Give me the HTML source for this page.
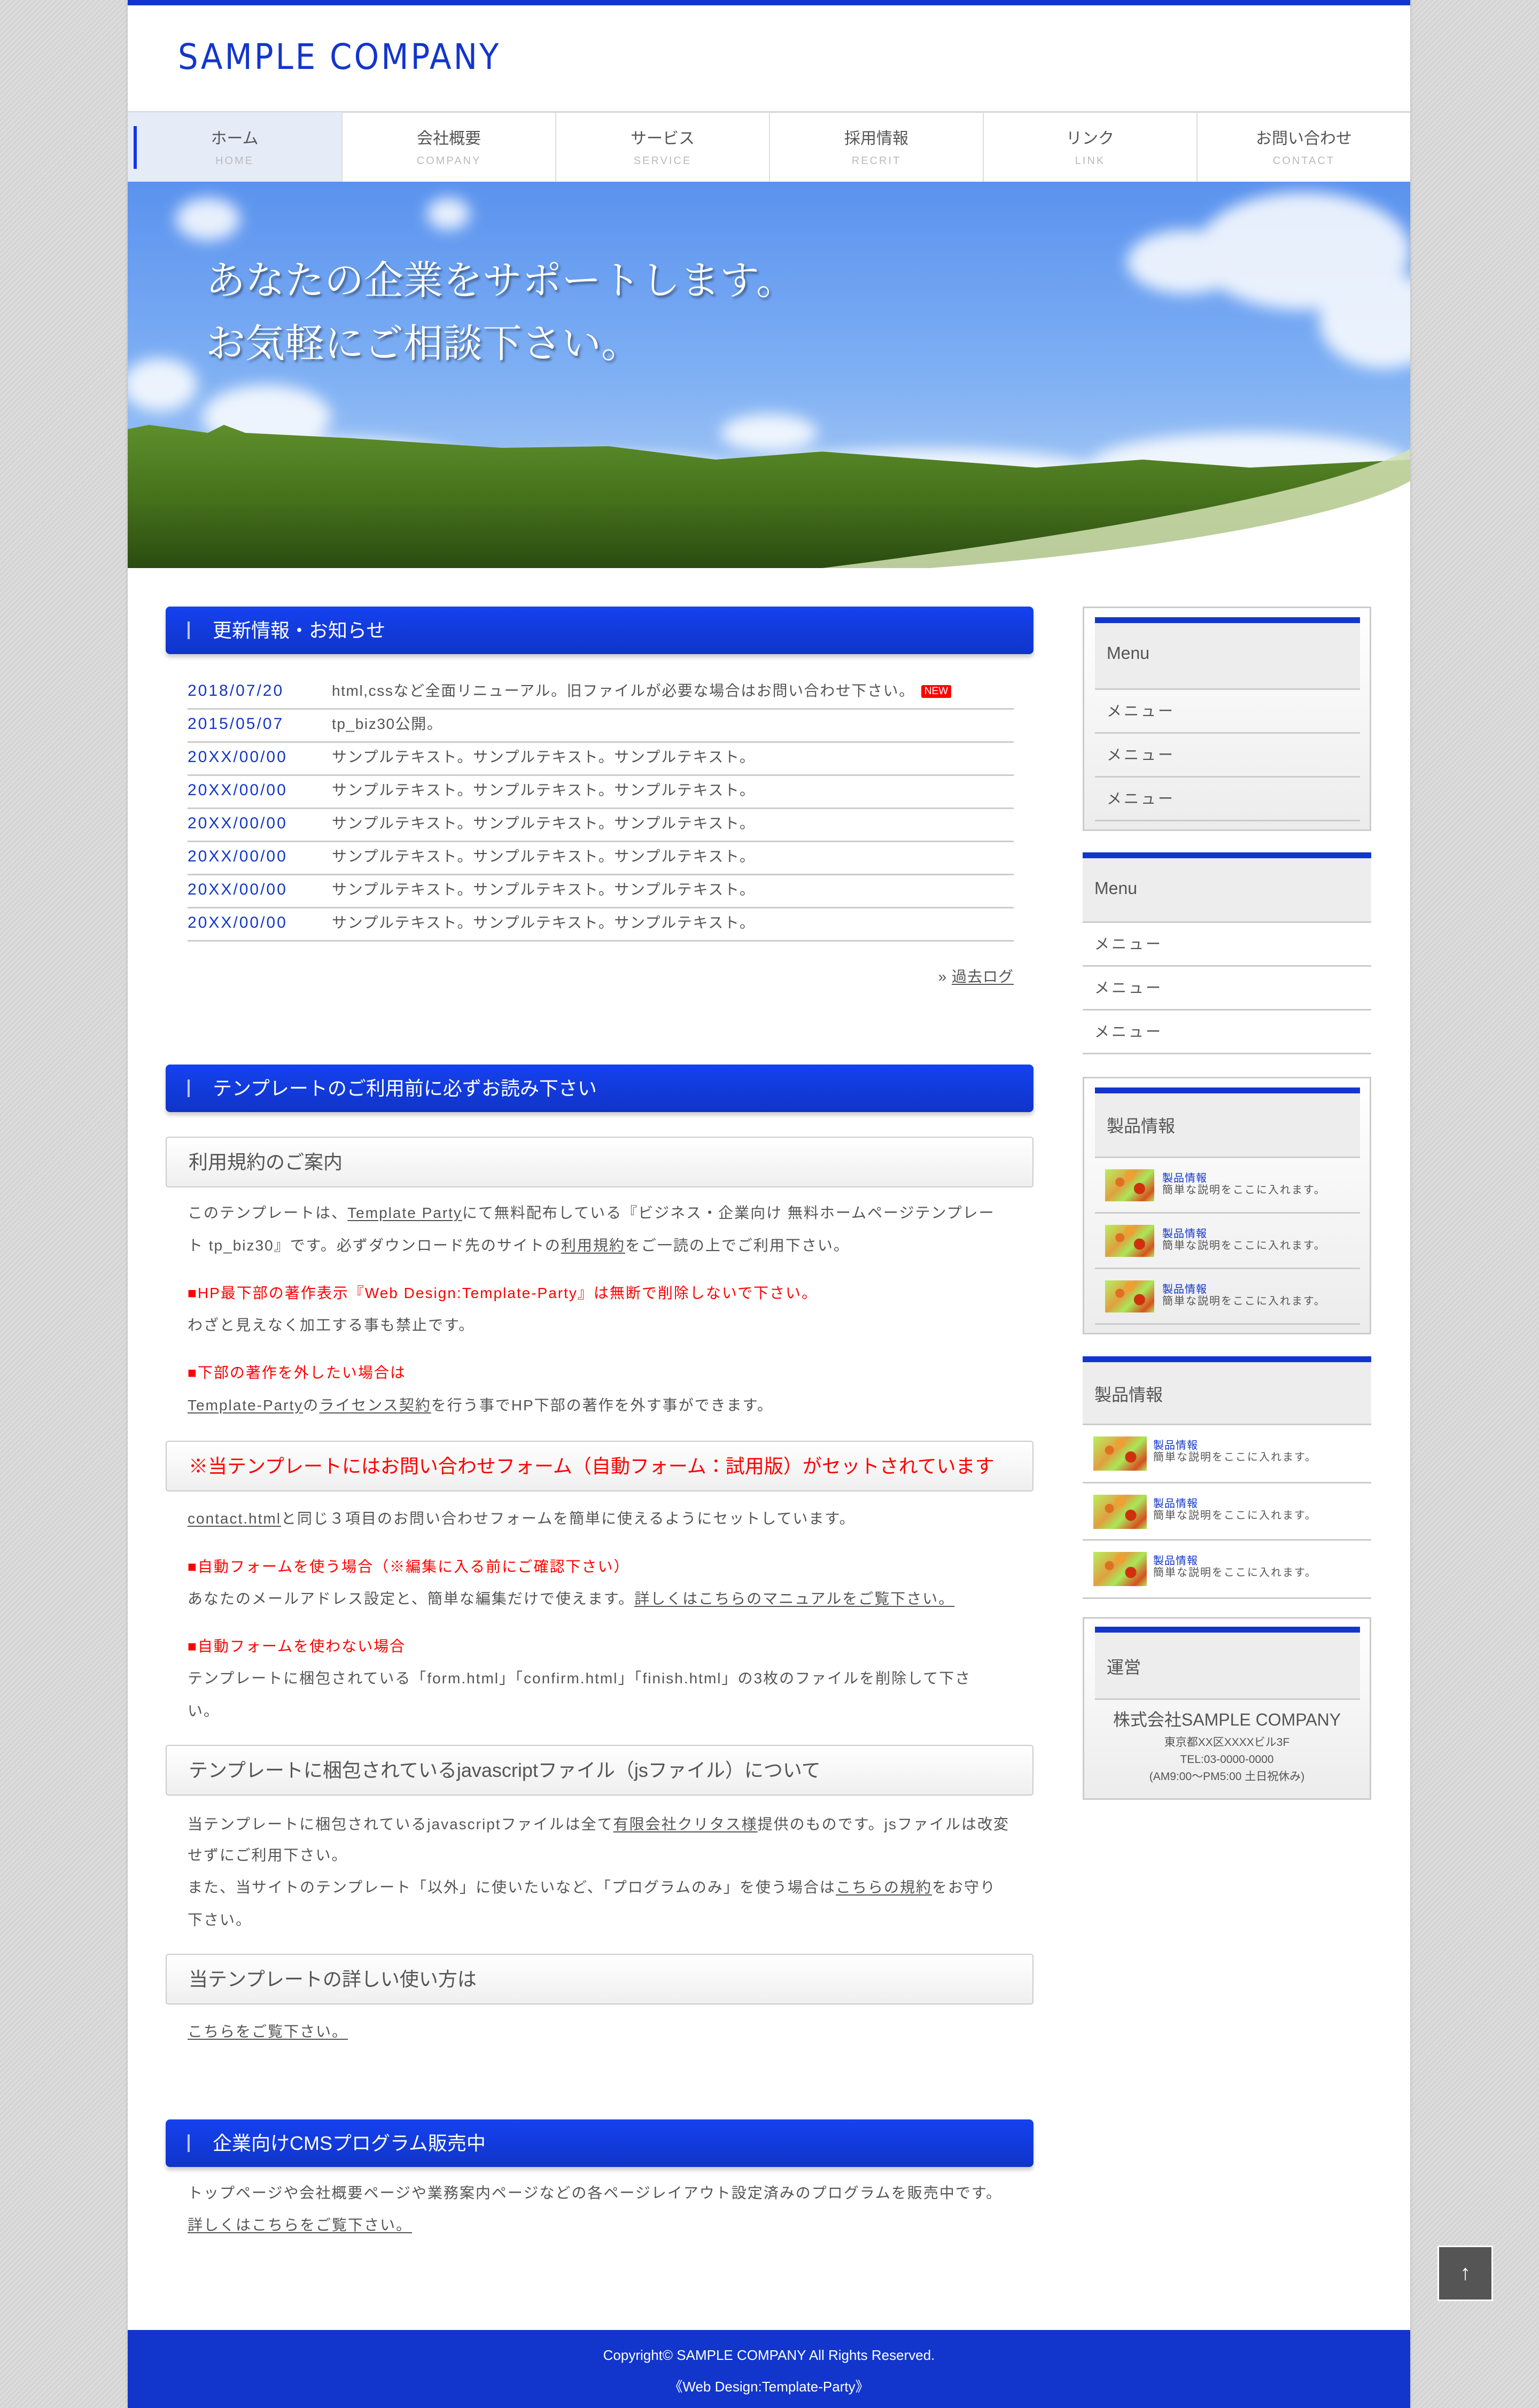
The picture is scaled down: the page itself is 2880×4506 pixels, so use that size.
<!DOCTYPE html>
<html><head><meta charset="utf-8">
<style>
*{margin:0;padding:0;box-sizing:border-box}
html,body{width:2880px;height:4506px;overflow:hidden}
body{background:#dadada repeating-linear-gradient(135deg,#dcdcdc 0 4px,#d3d3d3 4px 7px);font-family:"Liberation Sans","Noto Sans CJK JP",sans-serif;color:#555;position:relative}
#wrap{position:absolute;left:239px;top:0;width:2400px;height:4506px;background:#fff;box-shadow:0 0 6px rgba(0,0,0,.15)}
.a{position:absolute;white-space:nowrap}
.t{position:absolute;left:112px;font-size:28px;line-height:40px;white-space:nowrap;letter-spacing:2px;color:#555}
.red{color:#f00}
u{text-decoration:underline;text-underline-offset:4px}
.hbar{position:absolute;left:71px;width:1624px;height:89px;border-radius:8px;background:linear-gradient(#1542f0,#1034c8);box-shadow:0 6px 8px rgba(0,0,0,.2);color:#fff;font-size:36px;line-height:89px;padding-left:88px}
.hbar:before{content:"";position:absolute;left:41px;top:28px;width:4px;height:33px;background:#b8c4ea}
.box{position:absolute;left:71px;width:1624px;height:95px;border:2px solid #ccc;border-radius:5px;background:linear-gradient(#fff,#efefef);font-size:36px;line-height:91px;padding-left:41px;color:#555}
.nav{position:absolute;top:210px;height:130px;width:400px;border-left:2px solid #ddd;text-align:center}
.nav .j{position:absolute;left:0;right:0;top:24px;font-size:30px;color:#555}
.nav .e{position:absolute;left:0;right:0;top:80px;font-size:20px;color:#bbb;letter-spacing:3px}
.date{position:absolute;left:112px;font-size:30px;color:#1237c8;letter-spacing:3px;line-height:40px}
.nt{position:absolute;left:382px;font-size:28px;letter-spacing:1.6px;line-height:40px;white-space:nowrap}
.nl{position:absolute;left:112px;width:1546px;height:3px;background:#ccc}
.sb{position:absolute;left:1787px;width:540px}
.bord{border:3px solid #ccc;background:linear-gradient(#fff,#ececec)}
.sh{position:absolute;background:#ededed;border-top:11px solid #1236cc;border-bottom:3px solid #ccc;font-size:32px;color:#555}
.mi{position:absolute;height:82px;border-bottom:3px solid #ccc;font-size:28px;letter-spacing:4px;line-height:80px;color:#555}
.th{position:absolute;width:92px;height:60px;background:radial-gradient(circle at 30% 40%,#e07020 0 8px,transparent 9px),radial-gradient(circle at 70% 60%,#d03010 0 10px,transparent 11px),radial-gradient(circle at 50% 20%,#f0a030 0 9px,transparent 10px),linear-gradient(135deg,#b8f060,#e0a040 40%,#a8e858 60%,#d85020 85%,#b0ec5c)}
.pt{position:absolute;font-size:20px;line-height:22px;white-space:nowrap}
.pt b{font-weight:normal;color:#1236cc;display:block;letter-spacing:1px}
.pt span{letter-spacing:2px;color:#555}
</style></head><body>
<div id="wrap">
<div class="a" style="left:0;top:0;width:2400px;height:10px;background:#1236cc"></div>
<div class="a" style="left:94px;top:62px;font-size:66px;letter-spacing:4px;color:#1236cc;font-family:'DejaVu Sans Condensed','Liberation Sans',sans-serif;line-height:90px">SAMPLE COMPANY</div>
<div class="a" style="left:0;top:208px;width:2400px;height:3px;background:#d6d6d6"></div>
<div class="nav" style="left:0;background:#e6ebf8;border-left:0"><div class="a" style="left:11px;top:26px;width:6px;height:80px;background:#1236e8"></div><div class="j">ホーム</div><div class="e">HOME</div></div>
<div class="nav" style="left:400px"><div class="j">会社概要</div><div class="e">COMPANY</div></div>
<div class="nav" style="left:800px"><div class="j">サービス</div><div class="e">SERVICE</div></div>
<div class="nav" style="left:1200px"><div class="j">採用情報</div><div class="e">RECRIT</div></div>
<div class="nav" style="left:1600px"><div class="j">リンク</div><div class="e">LINK</div></div>
<div class="nav" style="left:2000px"><div class="j">お問い合わせ</div><div class="e">CONTACT</div></div>

<svg class="a" style="left:0;top:340px" width="2400" height="723" viewBox="0 0 2400 723">
<defs>
<linearGradient id="sky" x1="0" y1="0" x2="0" y2="1"><stop offset="0" stop-color="#5a92ee"/><stop offset=".5" stop-color="#7fb0f4"/><stop offset="1" stop-color="#b8d4f4"/></linearGradient>
<linearGradient id="hill" x1="0" y1="0" x2="0" y2="1"><stop offset="0" stop-color="#5e8e2c"/><stop offset=".5" stop-color="#46721c"/><stop offset="1" stop-color="#2a4c10"/></linearGradient>
<filter id="bl"><feGaussianBlur stdDeviation="14"/></filter>
</defs>
<rect width="2400" height="723" fill="url(#sky)"/>
<g fill="#fff" opacity=".85" filter="url(#bl)">
<ellipse cx="2200" cy="130" rx="200" ry="110"/><ellipse cx="1980" cy="150" rx="110" ry="60"/><ellipse cx="2350" cy="260" rx="120" ry="90"/>
<ellipse cx="260" cy="440" rx="120" ry="60"/><ellipse cx="60" cy="380" rx="70" ry="50"/>
<ellipse cx="400" cy="540" rx="260" ry="60"/><ellipse cx="900" cy="560" rx="300" ry="50"/><ellipse cx="1500" cy="560" rx="360" ry="60"/><ellipse cx="2100" cy="530" rx="300" ry="60"/>
<ellipse cx="150" cy="70" rx="60" ry="40"/><ellipse cx="600" cy="60" rx="40" ry="30"/><ellipse cx="1200" cy="470" rx="90" ry="35"/>
</g>
<path d="M0 463 L40 455 L150 470 L180 455 L220 470 L420 480 L700 498 L900 495 L1100 520 L1300 505 L1500 520 L1700 535 L1900 520 L2100 535 L2400 520 L2400 723 L0 723Z" fill="url(#hill)"/>
<path d="M1300 723 C1800 660 2250 580 2400 500 L2400 723Z" fill="#d4e2b4" opacity=".85"/>
<path d="M1500 723 C1950 690 2300 620 2400 560 L2400 723Z" fill="#fff"/>
</svg>
<div class="a" style="left:146px;top:460px;font-size:74px;line-height:118px;color:#fff;font-family:'Noto Serif CJK JP','Noto Serif CJK SC',serif;text-shadow:3px 4px 5px rgba(0,0,0,.45)">あなたの企業をサポートします。<br>お気軽にご相談下さい。</div>

<!-- main -->
<div class="hbar" style="top:1135px">更新情報・お知らせ</div>
<div class="date" style="top:1273px">2018/07/20</div><div class="nt" style="top:1273px">html,cssなど全面リニューアル。旧ファイルが必要な場合はお問い合わせ下さい。<span style="display:inline-block;background:#f00;color:#fff;font-size:19px;line-height:24px;padding:0 6px;border-radius:3px;vertical-align:3px;margin-left:12px;letter-spacing:0">NEW</span></div><div class="nl" style="top:1325px"></div>
<div class="date" style="top:1335px">2015/05/07</div><div class="nt" style="top:1335px">tp_biz30公開。</div><div class="nl" style="top:1387px"></div>
<div class="date" style="top:1397px">20XX/00/00</div><div class="nt" style="top:1397px">サンプルテキスト。サンプルテキスト。サンプルテキスト。</div><div class="nl" style="top:1449px"></div>
<div class="date" style="top:1459px">20XX/00/00</div><div class="nt" style="top:1459px">サンプルテキスト。サンプルテキスト。サンプルテキスト。</div><div class="nl" style="top:1511px"></div>
<div class="date" style="top:1521px">20XX/00/00</div><div class="nt" style="top:1521px">サンプルテキスト。サンプルテキスト。サンプルテキスト。</div><div class="nl" style="top:1573px"></div>
<div class="date" style="top:1583px">20XX/00/00</div><div class="nt" style="top:1583px">サンプルテキスト。サンプルテキスト。サンプルテキスト。</div><div class="nl" style="top:1635px"></div>
<div class="date" style="top:1645px">20XX/00/00</div><div class="nt" style="top:1645px">サンプルテキスト。サンプルテキスト。サンプルテキスト。</div><div class="nl" style="top:1697px"></div>
<div class="date" style="top:1707px">20XX/00/00</div><div class="nt" style="top:1707px">サンプルテキスト。サンプルテキスト。サンプルテキスト。</div><div class="nl" style="top:1759px"></div>
<div class="t" style="left:auto;right:742px;top:1808px;letter-spacing:1px">» <u>過去ログ</u></div>

<div class="hbar" style="top:1992px">テンプレートのご利用前に必ずお読み下さい</div>
<div class="box" style="top:2127px">利用規約のご案内</div>
<div class="t" style="top:2250px">このテンプレートは、<u>Template Party</u>にて無料配布している『ビジネス・企業向け 無料ホームページテンプレー</div>
<div class="t" style="top:2311px">ト tp_biz30』です。必ずダウンロード先のサイトの<u>利用規約</u>をご一読の上でご利用下さい。</div>
<div class="t red" style="top:2400px">■HP最下部の著作表示『Web Design:Template-Party』は無断で削除しないで下さい。</div>
<div class="t" style="top:2460px">わざと見えなく加工する事も禁止です。</div>
<div class="t red" style="top:2549px">■下部の著作を外したい場合は</div>
<div class="t" style="top:2610px"><u>Template-Party</u>の<u>ライセンス契約</u>を行う事でHP下部の著作を外す事ができます。</div>
<div class="box red" style="top:2696px;color:#f00">※当テンプレートにはお問い合わせフォーム（自動フォーム：試用版）がセットされています</div>
<div class="t" style="top:2822px"><u>contact.html</u>と同じ３項目のお問い合わせフォームを簡単に使えるようにセットしています。</div>
<div class="t red" style="top:2912px">■自動フォームを使う場合（※編集に入る前にご確認下さい）</div>
<div class="t" style="top:2972px">あなたのメールアドレス設定と、簡単な編集だけで使えます。<u>詳しくはこちらのマニュアルをご覧下さい。</u></div>
<div class="t red" style="top:3061px">■自動フォームを使わない場合</div>
<div class="t" style="top:3121px">テンプレートに梱包されている「form.html」「confirm.html」「finish.html」の3枚のファイルを削除して下さ</div>
<div class="t" style="top:3182px">い。</div>
<div class="box" style="top:3265px">テンプレートに梱包されているjavascriptファイル（jsファイル）について</div>
<div class="t" style="top:3394px">当テンプレートに梱包されているjavascriptファイルは全て<u>有限会社クリタス様</u>提供のものです。jsファイルは改変</div>
<div class="t" style="top:3452px">せずにご利用下さい。</div>
<div class="t" style="top:3512px">また、当サイトのテンプレート「以外」に使いたいなど、「プログラムのみ」を使う場合は<u>こちらの規約</u>をお守り</div>
<div class="t" style="top:3573px">下さい。</div>
<div class="box" style="top:3656px">当テンプレートの詳しい使い方は</div>
<div class="t" style="top:3782px"><u>こちらをご覧下さい。</u></div>

<div class="hbar" style="top:3966px">企業向けCMSプログラム販売中</div>
<div class="t" style="top:4084px">トップページや会社概要ページや業務案内ページなどの各ページレイアウト設定済みのプログラムを販売中です。</div>
<div class="t" style="top:4144px"><u>詳しくはこちらをご覧下さい。</u></div>

<!-- sidebar -->
<div class="sb bord" style="top:1135px;height:420px">
 <div class="sh" style="left:20px;top:17px;width:496px;height:136px;padding:38px 0 0 22px">Menu</div>
 <div class="mi" style="left:20px;top:153px;width:496px;padding-left:22px">メニュー</div>
 <div class="mi" style="left:20px;top:235px;width:496px;padding-left:22px">メニュー</div>
 <div class="mi" style="left:20px;top:317px;width:496px;padding-left:22px">メニュー</div>
</div>
<div class="sb" style="top:1595px;height:380px">
 <div class="sh" style="left:0;top:0;width:540px;height:132px;padding:38px 0 0 22px">Menu</div>
 <div class="mi" style="left:0;top:132px;width:540px;padding-left:22px">メニュー</div>
 <div class="mi" style="left:0;top:214px;width:540px;padding-left:22px">メニュー</div>
 <div class="mi" style="left:0;top:296px;width:540px;padding-left:22px">メニュー</div>
</div>
<div class="sb bord" style="top:2015px;height:482px">
 <div class="sh" style="left:20px;top:17px;width:496px;height:132px;padding:36px 0 0 22px">製品情報</div>
 <div class="mi" style="left:20px;top:149px;width:496px;height:104px"></div>
 <div class="mi" style="left:20px;top:253px;width:496px;height:104px"></div>
 <div class="mi" style="left:20px;top:357px;width:496px;height:104px"></div>
 <div class="th" style="left:39px;top:170px"></div><div class="pt" style="left:146px;top:176px"><b>製品情報</b><span>簡単な説明をここに入れます。</span></div>
 <div class="th" style="left:39px;top:274px"></div><div class="pt" style="left:146px;top:280px"><b>製品情報</b><span>簡単な説明をここに入れます。</span></div>
 <div class="th" style="left:39px;top:378px"></div><div class="pt" style="left:146px;top:384px"><b>製品情報</b><span>簡単な説明をここに入れます。</span></div>
</div>
<div class="sb" style="top:2538px;height:460px">
 <div class="sh" style="left:0;top:0;width:540px;height:129px;padding:36px 0 0 22px">製品情報</div>
 <div class="mi" style="left:0;top:129px;width:540px;height:109px"></div>
 <div class="mi" style="left:0;top:238px;width:540px;height:107px"></div>
 <div class="mi" style="left:0;top:345px;width:540px;height:109px"></div>
 <div class="th" style="left:20px;top:150px;width:100px;height:64px"></div><div class="pt" style="left:132px;top:156px"><b>製品情報</b><span>簡単な説明をここに入れます。</span></div>
 <div class="th" style="left:20px;top:259px;width:100px;height:64px"></div><div class="pt" style="left:132px;top:265px"><b>製品情報</b><span>簡単な説明をここに入れます。</span></div>
 <div class="th" style="left:20px;top:366px;width:100px;height:64px"></div><div class="pt" style="left:132px;top:372px"><b>製品情報</b><span>簡単な説明をここに入れます。</span></div>
</div>
<div class="sb bord" style="top:3026px;height:342px">
 <div class="sh" style="left:20px;top:15px;width:496px;height:137px;padding:40px 0 0 22px">運営</div>
 <div class="a" style="left:0;width:534px;top:164px;text-align:center;font-size:32px;color:#555">株式会社SAMPLE COMPANY</div>
 <div class="a" style="left:0;width:534px;top:216px;text-align:center;font-size:21px;line-height:32px;color:#555">東京都XX区XXXXビル3F<br>TEL:03-0000-0000<br>(AM9:00～PM5:00 土日祝休み)</div>
</div>

<div class="a" style="left:0;top:4360px;width:2400px;height:146px;background:#1236cc;color:#fff;text-align:center;font-size:26px">
 <div style="position:absolute;left:0;right:0;top:32px">Copyright© SAMPLE COMPANY All Rights Reserved.</div>
 <div style="position:absolute;left:0;right:0;top:86px">《Web Design:Template-Party》</div>
</div>
</div>
<div class="a" style="left:2690px;top:4202px;width:104px;height:104px;background:#555;border:3px solid #fff;color:#fff;font-size:40px;text-align:center;line-height:96px">↑</div>
</body></html>
